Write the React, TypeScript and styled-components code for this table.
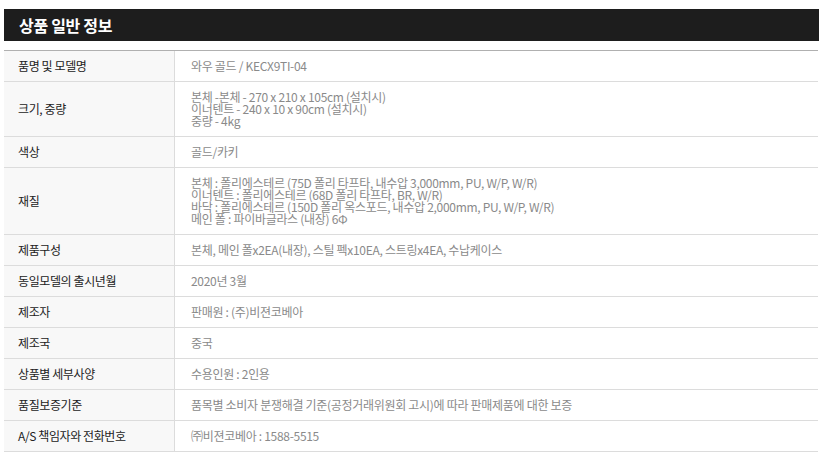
import React from 'react';
import styled, { createGlobalStyle } from 'styled-components';

const GlobalStyle = createGlobalStyle`
  body {
    margin: 0;
    background: #ffffff;
    font-family: "Noto Sans CJK KR", "Noto Sans", sans-serif;
  }
`;

const Page = styled.div`
  width: 815px;
  padding: 9px 0 0 4px;
`;

const TitleBar = styled.h2`
  margin: 0;
  height: 32px;
  background: #1d1d1d;
  color: #ffffff;
  font-size: 16px;
  font-weight: 700;
  line-height: 32px;
  padding-left: 15px;
  letter-spacing: -0.3px;
`;

const Table = styled.div`
  margin-top: 9px;
  width: 814px;
  border-top: 1px solid #b0b0b0;
  display: grid;
  grid-template-columns: 171px 1fr;
`;

const LabelCell = styled.div`
  background: #f8f8f8;
  border-bottom: 1px solid #dcdcdc;
  border-right: 1px solid #dcdcdc;
  padding: 9px 0 9px 14px;
  display: flex;
  align-items: center;
  font-size: 12px;
  line-height: 12px;
  color: #222222;
  letter-spacing: -0.4px;
`;

const ValueCell = styled.div`
  border-bottom: 1px solid #dcdcdc;
  padding: 9px 0 9px 16px;
  font-size: 12px;
  line-height: 12px;
  color: #8a8a8a;
  letter-spacing: -0.3px;
`;

const Line = styled.div`
  white-space: nowrap;
`;

const rows: [string, string[]][] = [
  ['품명 및 모델명', ['와우 골드 / KECX9TI-04']],
  ['크기, 중량', ['본체 -본체 - 270 x 210 x 105cm (설치시)', '이너텐트 - 240 x 10 x 90cm (설치시)', '중량 - 4kg']],
  ['색상', ['골드/카키']],
  ['재질', [
    '본체 : 폴리에스테르 (75D 폴리 타프타, 내수압 3,000mm, PU, W/P, W/R)',
    '이너텐트 : 폴리에스테르 (68D 폴리 타프타, BR, W/R)',
    '바닥 : 폴리에스테르 (150D 폴리 옥스포드, 내수압 2,000mm, PU, W/P, W/R)',
    '메인 폴 : 파이바글라스 (내장) 6Φ',
  ]],
  ['제품구성', ['본체, 메인 폴x2EA(내장), 스틸 펙x10EA, 스트링x4EA, 수납케이스']],
  ['동일모델의 출시년월', ['2020년 3월']],
  ['제조자', ['판매원 : (주)비젼코베아']],
  ['제조국', ['중국']],
  ['상품별 세부사양', ['수용인원 : 2인용']],
  ['품질보증기준', ['품목별 소비자 분쟁해결 기준(공정거래위원회 고시)에 따라 판매제품에 대한 보증']],
  ['A/S 책임자와 전화번호', ['㈜비젼코베아 : 1588-5515']],
];

export default function App(): JSX.Element {
  return (
    <Page>
      <GlobalStyle />
      <TitleBar>상품 일반 정보</TitleBar>
      <Table>
        {rows.map(([label, lines]) => (
          <React.Fragment key={label}>
            <LabelCell>{label}</LabelCell>
            <ValueCell>
              {lines.map((l) => (
                <Line key={l}>{l}</Line>
              ))}
            </ValueCell>
          </React.Fragment>
        ))}
      </Table>
    </Page>
  );
}
